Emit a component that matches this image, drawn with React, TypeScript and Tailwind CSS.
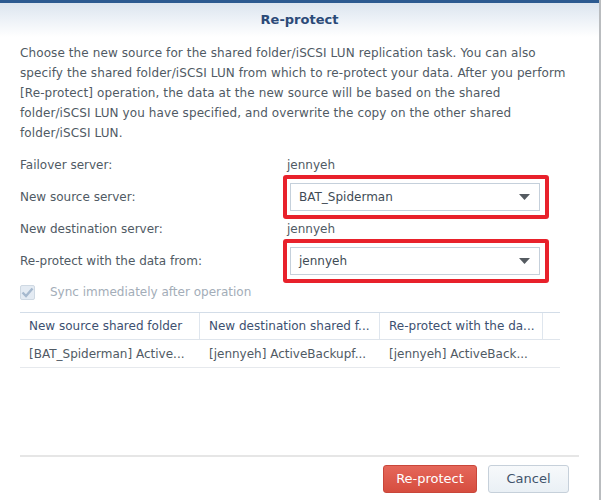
import React from "react";

function RedCombo({ value }: { value: string }) {
  return (
    <div className="w-[266px] h-[44px] border-[4px] border-[#e8212b] rounded-[3px] pl-[3px] pr-[5px] py-[4px] box-border">
      <div className="h-[28px] border border-[#c5d0db] bg-white flex items-center justify-between pl-[8px] pr-[9px] box-border">
        <span className="text-[#414b55]">{value}</span>
        <svg width="11" height="6" viewBox="0 0 11 6">
          <path d="M0 0 L11 0 L5.5 6 Z" fill="#555b61" />
        </svg>
      </div>
    </div>
  );
}

export default function App() {
  return (
    <div
      className="w-[601px] h-[500px] bg-white flex flex-col border-r-2 border-[#b9bcbf] box-border text-[12px] text-[#505a64] overflow-hidden"
      style={{ fontFamily: '"DejaVu Sans", Verdana, sans-serif' }}
    >
      <div className="h-[3px] bg-[#2c5a90]" />
      <div className="h-[34px] bg-gradient-to-b from-[#dce5ef] to-white flex items-center justify-center text-[13px] font-bold text-[#2b4a78]">
        Re-protect
      </div>
      <div className="flex-1 flex flex-col px-[20px]">
        <p className="pt-[6px] leading-[20px] whitespace-nowrap tracking-[0.1px]">
          Choose the new source for the shared folder/iSCSI LUN replication task. You can also
          <br />
          specify the shared folder/iSCSI LUN from which to re-protect your data. After you perform
          <br />
          [Re-protect] operation, the data at the new source will be based on the shared
          <br />
          folder/iSCSI LUN you have specified, and overwrite the copy on the other shared
          <br />
          folder/iSCSI LUN.
        </p>

        <div className="mt-[12px] grid grid-cols-[263px_1fr]">
          <div className="h-[20px] flex items-center">Failover server:</div>
          <div className="h-[20px] flex items-center pl-[4px]">jennyeh</div>

          <div className="h-[44px] flex items-center">New source server:</div>
          <div className="h-[44px] flex items-center">
            <RedCombo value="BAT_Spiderman" />
          </div>

          <div className="h-[20px] flex items-center">New destination server:</div>
          <div className="h-[20px] flex items-center pl-[4px]">jennyeh</div>

          <div className="h-[44px] flex items-center">Re-protect with the data from:</div>
          <div className="h-[44px] flex items-center">
            <RedCombo value="jennyeh" />
          </div>
        </div>

        <div className="h-[18px] flex items-center">
          <div className="w-[15px] h-[15px] rounded-[2px] border border-[#cfd9e3] bg-[#e4ebf3] flex items-center justify-center box-border">
            <svg width="13" height="11" viewBox="0 0 13 11">
              <path d="M1.5 5.5 L5 9 L11.5 1.5" stroke="#a6b9ce" strokeWidth="2.4" fill="none" />
            </svg>
          </div>
          <span className="ml-[15px] text-[#a3adb8]">Sync immediately after operation</span>
        </div>

        <div className="mt-[11px] w-[540px] border-t border-[#d3dde8]">
          <div className="h-[27px] flex border-b border-[#dfe5ec] text-[#3d5070]">
            <div className="w-[180px] border-r border-[#dfe6ee] flex items-center pl-[9px] whitespace-nowrap overflow-hidden">
              New source shared folder
            </div>
            <div className="w-[180px] border-r border-[#dfe6ee] flex items-center pl-[9px] whitespace-nowrap overflow-hidden">
              New destination shared f...
            </div>
            <div className="w-[163px] border-r border-[#dfe6ee] flex items-center pl-[9px] whitespace-nowrap overflow-hidden">
              Re-protect with the da...
            </div>
            <div className="flex-1" />
          </div>
          <div className="h-[28px] flex border-b border-[#e6e9ed]">
            <div className="w-[180px] flex items-center pl-[9px] whitespace-nowrap overflow-hidden">
              [BAT_Spiderman] Active...
            </div>
            <div className="w-[180px] flex items-center pl-[9px] whitespace-nowrap overflow-hidden">
              [jennyeh] ActiveBackupf...
            </div>
            <div className="w-[163px] flex items-center pl-[9px] whitespace-nowrap overflow-hidden">
              [jennyeh] ActiveBack...
            </div>
          </div>
        </div>

        <div className="mt-auto h-[45px] border-t-2 border-[#e6e6e6] flex items-start justify-end pt-[8px] pr-[10px] gap-[11px]">
          <button className="w-[94px] h-[28px] rounded-[3px] border border-[#c9463a] bg-gradient-to-b from-[#e5675a] to-[#d64d3f] text-white text-[13px]">
            Re-protect
          </button>
          <button className="w-[81px] h-[28px] rounded-[3px] border border-[#c6d0da] bg-gradient-to-b from-[#f7f9fb] to-[#eaf0f5] text-[#3f536b] text-[13px]">
            Cancel
          </button>
        </div>
      </div>
    </div>
  );
}
